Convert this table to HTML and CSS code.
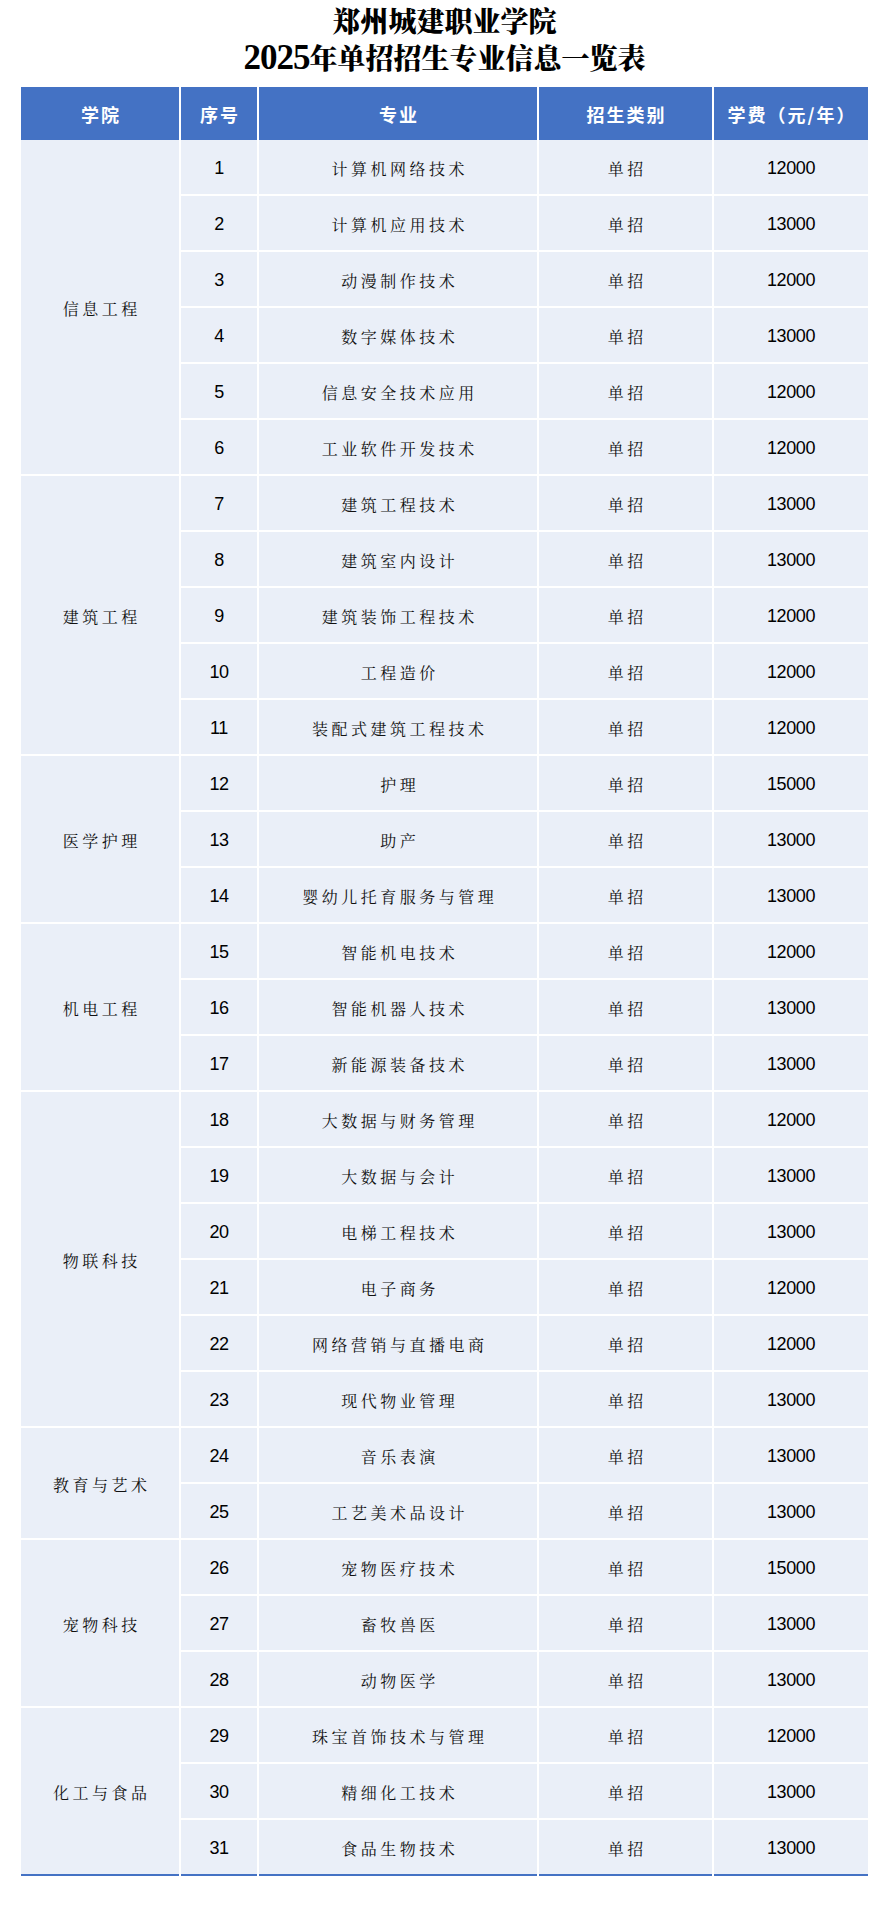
FILE: index.html
```html
<!DOCTYPE html>
<html lang="zh-CN">
<head>
<meta charset="utf-8">
<title>郑州城建职业学院2025年单招招生专业信息一览表</title>
<link rel="stylesheet" href="styles.css">
</head>
<body>
<div class="page">
  <h1 class="title">
    <span class="line">郑州城建职业学院</span>
    <span class="line"><span class="year">2025</span>年单招招生专业信息一览表</span>
  </h1>
  <div class="table">
    <div class="thead">
      <div class="th">学院</div>
      <div class="th">序号</div>
      <div class="th">专业</div>
      <div class="th">招生类别</div>
      <div class="th">学费（元/年）</div>
    </div>
    <div class="tbody">
      <div class="td college span6">信息工程</div>
      <div class="td num">1</div><div class="td zh">计算机网络技术</div><div class="td zh">单招</div><div class="td num">12000</div>
      <div class="td num">2</div><div class="td zh">计算机应用技术</div><div class="td zh">单招</div><div class="td num">13000</div>
      <div class="td num">3</div><div class="td zh">动漫制作技术</div><div class="td zh">单招</div><div class="td num">12000</div>
      <div class="td num">4</div><div class="td zh">数字媒体技术</div><div class="td zh">单招</div><div class="td num">13000</div>
      <div class="td num">5</div><div class="td zh">信息安全技术应用</div><div class="td zh">单招</div><div class="td num">12000</div>
      <div class="td num">6</div><div class="td zh">工业软件开发技术</div><div class="td zh">单招</div><div class="td num">12000</div>

      <div class="td college span5">建筑工程</div>
      <div class="td num">7</div><div class="td zh">建筑工程技术</div><div class="td zh">单招</div><div class="td num">13000</div>
      <div class="td num">8</div><div class="td zh">建筑室内设计</div><div class="td zh">单招</div><div class="td num">13000</div>
      <div class="td num">9</div><div class="td zh">建筑装饰工程技术</div><div class="td zh">单招</div><div class="td num">12000</div>
      <div class="td num">10</div><div class="td zh">工程造价</div><div class="td zh">单招</div><div class="td num">12000</div>
      <div class="td num">11</div><div class="td zh">装配式建筑工程技术</div><div class="td zh">单招</div><div class="td num">12000</div>

      <div class="td college span3">医学护理</div>
      <div class="td num">12</div><div class="td zh">护理</div><div class="td zh">单招</div><div class="td num">15000</div>
      <div class="td num">13</div><div class="td zh">助产</div><div class="td zh">单招</div><div class="td num">13000</div>
      <div class="td num">14</div><div class="td zh">婴幼儿托育服务与管理</div><div class="td zh">单招</div><div class="td num">13000</div>

      <div class="td college span3">机电工程</div>
      <div class="td num">15</div><div class="td zh">智能机电技术</div><div class="td zh">单招</div><div class="td num">12000</div>
      <div class="td num">16</div><div class="td zh">智能机器人技术</div><div class="td zh">单招</div><div class="td num">13000</div>
      <div class="td num">17</div><div class="td zh">新能源装备技术</div><div class="td zh">单招</div><div class="td num">13000</div>

      <div class="td college span6">物联科技</div>
      <div class="td num">18</div><div class="td zh">大数据与财务管理</div><div class="td zh">单招</div><div class="td num">12000</div>
      <div class="td num">19</div><div class="td zh">大数据与会计</div><div class="td zh">单招</div><div class="td num">13000</div>
      <div class="td num">20</div><div class="td zh">电梯工程技术</div><div class="td zh">单招</div><div class="td num">13000</div>
      <div class="td num">21</div><div class="td zh">电子商务</div><div class="td zh">单招</div><div class="td num">12000</div>
      <div class="td num">22</div><div class="td zh">网络营销与直播电商</div><div class="td zh">单招</div><div class="td num">12000</div>
      <div class="td num">23</div><div class="td zh">现代物业管理</div><div class="td zh">单招</div><div class="td num">13000</div>

      <div class="td college span2">教育与艺术</div>
      <div class="td num">24</div><div class="td zh">音乐表演</div><div class="td zh">单招</div><div class="td num">13000</div>
      <div class="td num">25</div><div class="td zh">工艺美术品设计</div><div class="td zh">单招</div><div class="td num">13000</div>

      <div class="td college span3">宠物科技</div>
      <div class="td num">26</div><div class="td zh">宠物医疗技术</div><div class="td zh">单招</div><div class="td num">15000</div>
      <div class="td num">27</div><div class="td zh">畜牧兽医</div><div class="td zh">单招</div><div class="td num">13000</div>
      <div class="td num">28</div><div class="td zh">动物医学</div><div class="td zh">单招</div><div class="td num">13000</div>

      <div class="td college span3 last">化工与食品</div>
      <div class="td num">29</div><div class="td zh">珠宝首饰技术与管理</div><div class="td zh">单招</div><div class="td num">12000</div>
      <div class="td num">30</div><div class="td zh">精细化工技术</div><div class="td zh">单招</div><div class="td num">13000</div>
      <div class="td num last">31</div><div class="td zh last">食品生物技术</div><div class="td zh last">单招</div><div class="td num last">13000</div>
    </div>
  </div>
</div>
</body>
</html>
```

FILE: styles.css
```css
html, body {
  margin: 0;
  padding: 0;
  background: #ffffff;
}

.page {
  padding: 2px 0 0 21px;
  width: 847px;
  font-family: "Noto Serif CJK SC", "Noto Sans CJK SC", sans-serif;
  color: #111111;
}

.title {
  margin: 0;
  display: flex;
  flex-direction: column;
  align-items: center;
  font-family: "Noto Serif CJK SC", "Noto Sans CJK SC", serif;
  font-weight: 900;
  font-size: 28px;
  line-height: 37px;
  color: #000000;
}

.title .line {
  display: block;
  height: 37px;
  white-space: nowrap;
}

.title .year {
  font-family: "Liberation Serif", serif;
  font-weight: 700;
  font-size: 35px;
  letter-spacing: -1px;
  line-height: 37px;
  vertical-align: top;
}

.table {
  margin-top: 11px;
  padding-bottom: 4px;
}

.thead,
.tbody {
  display: grid;
  grid-template-columns: 158px 76px 278px 173px 154px;
  column-gap: 2px;
}

.thead {
  height: 53px;
}

.th {
  background: #4472c4;
  color: #ffffff;
  font-family: "Noto Sans CJK SC", sans-serif;
  font-weight: 700;
  font-size: 18px;
  letter-spacing: 2px;
  padding-left: 2px;
  display: flex;
  align-items: center;
  justify-content: center;
  white-space: nowrap;
}

.tbody {
  grid-auto-rows: 54px;
  row-gap: 2px;
}

.td {
  background: #eaeff8;
  display: flex;
  align-items: center;
  justify-content: center;
  white-space: nowrap;
  padding-top: 2px;
}

.td.zh {
  font-family: "Noto Serif CJK SC", "Noto Sans CJK SC", sans-serif;
  font-size: 16px;
  letter-spacing: 3.5px;
  padding-left: 3.5px;
}

.td.num {
  font-family: "Liberation Sans", Arial, sans-serif;
  font-size: 18px;
  letter-spacing: -0.4px;
  color: #000000;
}

.td.college {
  grid-column: 1;
  font-family: "Noto Serif CJK SC", "Noto Sans CJK SC", sans-serif;
  font-size: 16px;
  letter-spacing: 3.5px;
  padding-left: 3.5px;
}

.span2 { grid-row: span 2; }
.span3 { grid-row: span 3; }
.span5 { grid-row: span 5; }
.span6 { grid-row: span 6; }

.td.last {
  border-bottom: 2px solid #4472c4;
  margin-bottom: -2px;
}
```
